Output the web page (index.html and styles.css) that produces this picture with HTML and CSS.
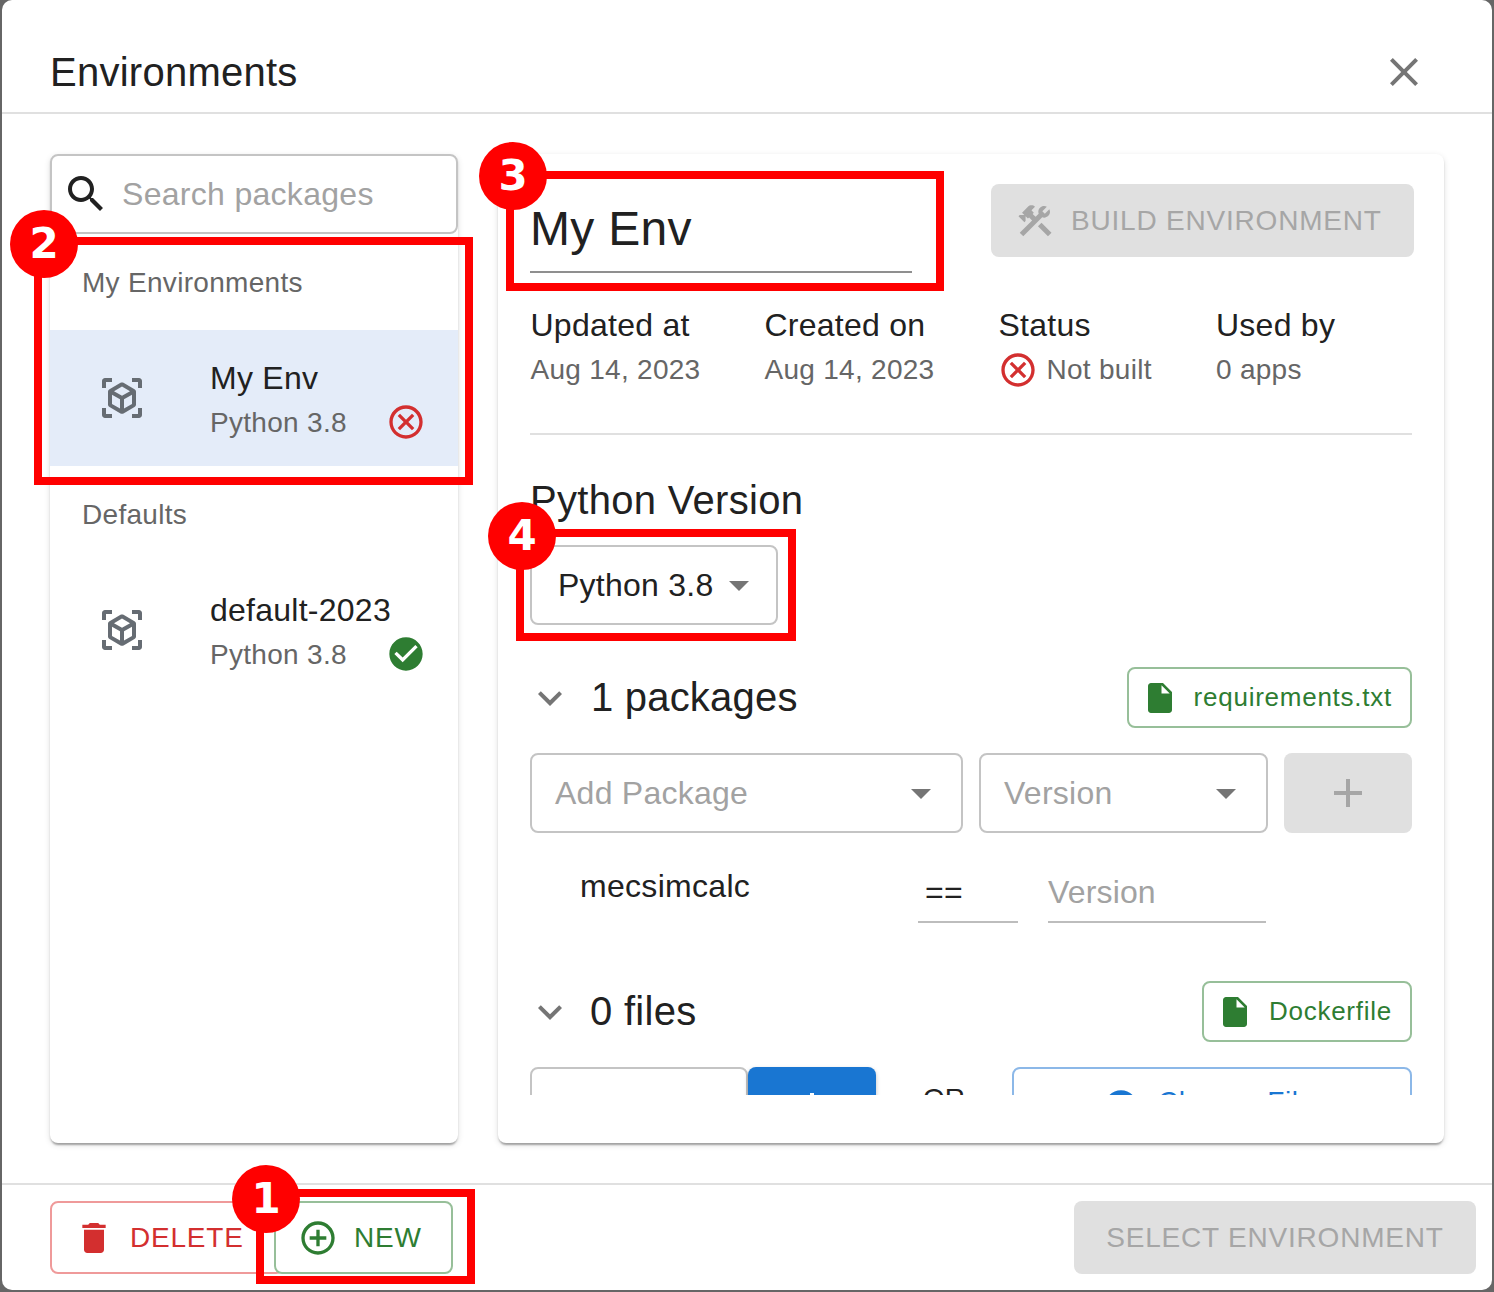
FILE: index.html
```html
<!DOCTYPE html>
<html lang="en">
<head>
  <meta charset="UTF-8">
  <title>Environments</title>
  <link rel="stylesheet" href="styles.css">
</head>
<body>

  <div class="dialog">
    <div class="dialog-head">
      <h2 class="dialog-title">Environments</h2>
      <svg class="icon-48 grey-icon close-icon" viewBox="0 0 24 24"><path d="M19 6.41 17.59 5 12 10.59 6.41 5 5 6.41 10.59 12 5 17.59 6.41 19 12 13.41 17.59 19 19 17.59 13.41 12z"/></svg>
    </div>

    <div class="dialog-body">
      <div class="card side-card">
        <div class="search-box">
          <svg class="icon-48 search-icon" viewBox="0 0 24 24"><path d="M15.5 14h-.79l-.28-.27C15.41 12.59 16 11.11 16 9.5 16 5.91 13.09 3 9.5 3S3 5.91 3 9.5 5.91 16 9.5 16c1.61 0 3.09-.59 4.23-1.57l.27.28v.79l5 4.99L20.49 19l-4.99-5zm-6 0C7.01 14 5 11.99 5 9.5S7.01 5 9.5 5 14 7.01 14 9.5 11.99 14 9.5 14z"/></svg>
          <span class="placeholder">Search packages</span>
        </div>

        <div class="list-label">My Environments</div>
        <div class="env-item selected">
          <svg class="icon-48 env-icon" viewBox="0 0 24 24"><path d="M18.25 7.6l-5.5-3.18c-.46-.27-1.04-.27-1.5 0L5.75 7.6c-.46.27-.75.76-.75 1.3v6.35c0 .54.29 1.03.75 1.3l5.5 3.18c.46.27 1.04.27 1.5 0l5.5-3.18c.46-.27.75-.76.75-1.3V8.9c0-.54-.29-1.03-.75-1.3zM7 14.96v-4.62l4 2.32v4.61l-4-2.31zm5-4.03L8 8.61l4-2.31 4 2.31-4 2.32zm1 6.34v-4.61l4-2.32v4.62l-4 2.31zM7 2H3.5C2.67 2 2 2.67 2 3.5V7h2V4h3V2zm10 0h3.5c.83 0 1.5.67 1.5 1.5V7h-2V4h-3V2zM7 22H3.5c-.83 0-1.5-.67-1.5-1.5V17h2v3h3v2zm10 0h3.5c.83 0 1.5-.67 1.5-1.5V17h-2v3h-3v2z"/></svg>
          <div class="env-text">
            <div class="env-name">My Env</div>
            <div class="env-sub">
              <span>Python 3.8</span>
              <svg class="icon-40 red-icon" viewBox="0 0 24 24"><path d="M12 2C6.47 2 2 6.47 2 12s4.47 10 10 10 10-4.47 10-10S17.53 2 12 2zm0 18c-4.41 0-8-3.59-8-8s3.59-8 8-8 8 3.59 8 8-3.59 8-8 8zm3.59-13L12 10.59 8.41 7 7 8.41 10.59 12 7 15.59 8.41 17 12 13.41 15.59 17 17 15.59 13.41 12 17 8.41z"/></svg>
            </div>
          </div>
        </div>

        <div class="list-label">Defaults</div>
        <div class="env-item">
          <svg class="icon-48 env-icon" viewBox="0 0 24 24"><path d="M18.25 7.6l-5.5-3.18c-.46-.27-1.04-.27-1.5 0L5.75 7.6c-.46.27-.75.76-.75 1.3v6.35c0 .54.29 1.03.75 1.3l5.5 3.18c.46.27 1.04.27 1.5 0l5.5-3.18c.46-.27.75-.76.75-1.3V8.9c0-.54-.29-1.03-.75-1.3zM7 14.96v-4.62l4 2.32v4.61l-4-2.31zm5-4.03L8 8.61l4-2.31 4 2.31-4 2.32zm1 6.34v-4.61l4-2.32v4.62l-4 2.31zM7 2H3.5C2.67 2 2 2.67 2 3.5V7h2V4h3V2zm10 0h3.5c.83 0 1.5.67 1.5 1.5V7h-2V4h-3V2zM7 22H3.5c-.83 0-1.5-.67-1.5-1.5V17h2v3h3v2zm10 0h3.5c.83 0 1.5-.67 1.5-1.5V17h-2v3h-3v2z"/></svg>
          <div class="env-text">
            <div class="env-name">default-2023</div>
            <div class="env-sub">
              <span>Python 3.8</span>
              <svg class="icon-40 green-icon" viewBox="0 0 24 24"><path d="M12 2C6.48 2 2 6.48 2 12s4.48 10 10 10 10-4.48 10-10S17.52 2 12 2zm-2 15-5-5 1.41-1.41L10 14.17l7.59-7.59L19 8l-9 9z"/></svg>
            </div>
          </div>
        </div>
      </div>

      <div class="card main-card">
        <div class="main-scroll">
          <div class="env-head">
            <div class="title-field">My Env</div>
            <div class="btn btn-disabled build-btn">
              <svg class="icon-40" viewBox="0 0 24 24"><path d="m13.7826 15.1719 2.1213-2.1213 5.9963 5.9962-2.1213 2.1213zM17.5 10c1.93 0 3.5-1.57 3.5-3.5 0-.58-.16-1.12-.41-1.6l-2.7 2.7-1.49-1.49 2.7-2.7c-.48-.25-1.02-.41-1.6-.41C15.57 3 14 4.57 14 6.5c0 .41.08.8.21 1.16l-1.85 1.85-1.78-1.78.71-.71-1.41-1.41L12 3.49c-1.17-1.17-3.07-1.17-4.24 0L4.22 7.03l1.41 1.41H2.81l-.71.71 3.54 3.54.71-.71V9.15l1.41 1.41.71-.71 1.78 1.78-7.41 7.41 2.12 2.12L16.34 9.79c.36.13.75.21 1.16.21z"/></svg>
              BUILD ENVIRONMENT
            </div>
          </div>

          <div class="meta-row">
            <div>
              <div class="meta-label">Updated at</div>
              <div class="meta-value">Aug 14, 2023</div>
            </div>
            <div>
              <div class="meta-label">Created on</div>
              <div class="meta-value">Aug 14, 2023</div>
            </div>
            <div>
              <div class="meta-label">Status</div>
              <div class="meta-value status-value">
                <svg class="icon-40 red-icon" viewBox="0 0 24 24"><path d="M12 2C6.47 2 2 6.47 2 12s4.47 10 10 10 10-4.47 10-10S17.53 2 12 2zm0 18c-4.41 0-8-3.59-8-8s3.59-8 8-8 8 3.59 8 8-3.59 8-8 8zm3.59-13L12 10.59 8.41 7 7 8.41 10.59 12 7 15.59 8.41 17 12 13.41 15.59 17 17 15.59 13.41 12 17 8.41z"/></svg>
                Not built
              </div>
            </div>
            <div>
              <div class="meta-label">Used by</div>
              <div class="meta-value">0 apps</div>
            </div>
          </div>

          <div class="divider"></div>

          <h3 class="version-title">Python Version</h3>
          <div class="select-box python-select">
            <span>Python 3.8</span>
            <svg class="icon-48 grey-icon" viewBox="0 0 24 24"><path d="m7 10 5 5 5-5z"/></svg>
          </div>

          <div class="section-row packages-row">
            <svg class="icon-48 grey-icon" viewBox="0 0 24 24"><path d="M16.59 8.59 12 13.17 7.41 8.59 6 10l6 6 6-6z"/></svg>
            <div class="section-title">1 packages</div>
            <div class="btn btn-file">
              <svg class="icon-36" viewBox="0 0 24 24"><path d="M6 2c-1.1 0-1.99.9-1.99 2L4 20c0 1.1.89 2 1.99 2H18c1.1 0 2-.9 2-2V8l-6-6H6zm7 7V3.5L18.5 9H13z"/></svg>
              requirements.txt
            </div>
          </div>

          <div class="add-row">
            <div class="select-box package-select">
              <span class="placeholder">Add Package</span>
              <svg class="icon-48 grey-icon" viewBox="0 0 24 24"><path d="m7 10 5 5 5-5z"/></svg>
            </div>
            <div class="select-box version-select">
              <span class="placeholder">Version</span>
              <svg class="icon-48 grey-icon" viewBox="0 0 24 24"><path d="m7 10 5 5 5-5z"/></svg>
            </div>
            <div class="btn-disabled add-btn">
              <svg class="icon-48" viewBox="0 0 24 24"><path d="M19 13h-6v6h-2v-6H5v-2h6V5h2v6h6v2z"/></svg>
            </div>
          </div>

          <div class="package-row">
            <div class="package-name">mecsimcalc</div>
            <div class="line-field op-field">==</div>
            <div class="line-field version-field placeholder">Version</div>
          </div>

          <div class="section-row files-row">
            <svg class="icon-48 grey-icon" viewBox="0 0 24 24"><path d="M16.59 8.59 12 13.17 7.41 8.59 6 10l6 6 6-6z"/></svg>
            <div class="section-title">0 files</div>
            <div class="btn btn-file">
              <svg class="icon-36" viewBox="0 0 24 24"><path d="M6 2c-1.1 0-1.99.9-1.99 2L4 20c0 1.1.89 2 1.99 2H18c1.1 0 2-.9 2-2V8l-6-6H6zm7 7V3.5L18.5 9H13z"/></svg>
              Dockerfile
            </div>
          </div>

          <div class="upload-row">
            <div class="file-input placeholder">File name</div>
            <div class="file-add">
              <svg class="icon-48" viewBox="0 0 24 24"><path d="M19 13h-6v6h-2v-6H5v-2h6V5h2v6h6v2z"/></svg>
            </div>
            <div class="or-text">OR</div>
            <div class="choose-btn">
              <svg class="icon-40" viewBox="0 0 24 24"><path d="M12 2C6.48 2 2 6.48 2 12s4.48 10 10 10 10-4.48 10-10S17.52 2 12 2zm5 11h-4v4h-2v-4H7v-2h4V7h2v4h4v2z"/></svg>
              <span class="choose-text">Choose File</span>
            </div>
          </div>
        </div>
      </div>
    </div>

    <div class="dialog-foot">
      <div class="foot-left">
        <div class="btn btn-delete">
          <svg class="icon-40" viewBox="0 0 24 24"><path d="M6 19c0 1.1.9 2 2 2h8c1.1 0 2-.9 2-2V7H6v12zM19 4h-3.5l-1-1h-5l-1 1H5v2h14V4z"/></svg>
          DELETE
        </div>
        <div class="btn btn-new">
          <svg class="icon-40" viewBox="0 0 24 24"><path d="M13 7h-2v4H7v2h4v4h2v-4h4v-2h-4V7zm-1-5C6.48 2 2 6.48 2 12s4.48 10 10 10 10-4.48 10-10S17.52 2 12 2zm0 18c-4.41 0-8-3.59-8-8s3.59-8 8-8 8 3.59 8 8-3.59 8-8 8z"/></svg>
          NEW
        </div>
      </div>
      <div class="btn btn-disabled select-btn">SELECT ENVIRONMENT</div>
    </div>
  </div>

  <!-- tutorial markers drawn over the screenshot -->
  <div class="mark-box mark-box-1"></div>
  <div class="mark-box mark-box-2"></div>
  <div class="mark-box mark-box-3"></div>
  <div class="mark-box mark-box-4"></div>
  <div class="mark-num mark-num-1">1</div>
  <div class="mark-num mark-num-2">2</div>
  <div class="mark-num mark-num-3">3</div>
  <div class="mark-num mark-num-4">4</div>

</body>
</html>
```

FILE: styles.css
```css
* {
  box-sizing: border-box;
}

html, body {
  height: 100%;
}

body {
  margin: 0;
  background: #666;
  color: #212121;
  font-family: "Liberation Sans", Arial, sans-serif;
  overflow: hidden;
  position: relative;
}

svg {
  display: block;
  flex: none;
  fill: currentColor;
}

.icon-48 { width: 48px; height: 48px; }
.icon-40 { width: 40px; height: 40px; }
.icon-36 { width: 36px; height: 36px; }

.grey-icon { color: #757575; }
.red-icon { color: #d32f2f; }
.green-icon { color: #2e7d32; }

.placeholder {
  color: #a2a2a2;
}

/* dialog */
.dialog {
  width: 1490px;
  height: 1290px;
  margin-left: 2px;
  background: #fff;
  border-radius: 10px;
  display: flex;
  flex-direction: column;
}

.dialog-head {
  height: 114px;
  flex: none;
  padding: 32px 64px 0 48px;
  border-bottom: 2px solid #e0e0e0;
  display: flex;
  align-items: center;
  justify-content: space-between;
}

.dialog-title {
  margin: 0;
  font-size: 40px;
  font-weight: 400;
  letter-spacing: .25px;
}

.dialog-body {
  flex: 1;
  padding: 40px 48px 0;
  display: flex;
  gap: 40px;
}

.card {
  height: 989px;
  background: #fff;
  border-radius: 8px;
  box-shadow: 0 4px 2px -2px rgba(0,0,0,.2), 0 2px 2px rgba(0,0,0,.14), 0 2px 6px rgba(0,0,0,.12);
}

/* left column */
.side-card {
  width: 408px;
  flex: none;
}

.search-box {
  height: 80px;
  padding-left: 10px;
  border: 2px solid #c4c4c4;
  border-radius: 8px;
  display: flex;
  align-items: center;
  gap: 12px;
  font-size: 32px;
  letter-spacing: .3px;
}

.search-icon {
  color: #212121;
}

.list-label {
  height: 96px;
  padding: 30px 0 0 32px;
  font-size: 28px;
  line-height: 38px;
  letter-spacing: .3px;
  color: #666;
}

.env-item {
  height: 136px;
  padding: 0 32px 0 48px;
  display: flex;
  align-items: center;
  gap: 64px;
}

.env-item.selected {
  background: #e4ecf9;
}

.env-icon {
  color: #666c73;
}

.env-text {
  flex: 1;
  padding-top: 8px;
}

.env-name {
  font-size: 32px;
  line-height: 40px;
  letter-spacing: .25px;
}

.env-sub {
  margin-top: 2px;
  height: 46px;
  display: flex;
  align-items: center;
  justify-content: space-between;
  font-size: 28px;
  letter-spacing: .3px;
  color: #666;
}

.env-sub svg {
  margin-top: -2px;
}

/* right column */
.main-card {
  flex: 1;
  padding: 0 30px 0 32px;
}

.main-scroll {
  height: 941px;
  overflow: hidden;
  padding: 30px 2px 0 0;
}

.env-head {
  height: 88px;
  margin-right: -2px;
  display: flex;
  justify-content: space-between;
  align-items: flex-start;
}

.title-field {
  width: 382px;
  height: 89px;
  padding-top: 17px;
  font-size: 48px;
  line-height: 56px;
  letter-spacing: .3px;
  border-bottom: 2px solid #8f8f8f;
}

.btn {
  display: flex;
  align-items: center;
  border-radius: 8px;
  font-size: 28px;
  letter-spacing: .8px;
}

.btn-disabled {
  background: #e0e0e0;
  color: #a6a6a6;
}

.build-btn {
  width: 423px;
  height: 73px;
  padding-left: 24px;
  gap: 16px;
}

.meta-row {
  margin-top: 34px;
  padding-left: .5px;
  display: grid;
  grid-template-columns: 234px 234px 217.5px 1fr;
}

.meta-label {
  font-size: 32px;
  line-height: 38px;
  letter-spacing: .25px;
}

.meta-value {
  margin-top: 6px;
  font-size: 28px;
  line-height: 40px;
  letter-spacing: .28px;
  color: #666;
}

.status-value {
  display: flex;
  align-items: center;
  gap: 9px;
}

.status-value svg {
  margin-left: -1px;
}

.divider {
  margin-top: 43px;
  height: 2px;
  background: #e0e0e0;
}

.version-title {
  margin: 42px 0 0;
  font-size: 40px;
  line-height: 46px;
  font-weight: 400;
  letter-spacing: .3px;
}

.select-box {
  height: 80px;
  border: 2px solid #c4c4c4;
  border-radius: 8px;
  display: flex;
  align-items: center;
  justify-content: space-between;
  font-size: 32px;
  letter-spacing: .25px;
}

.python-select {
  width: 248px;
  margin-top: 22px;
  padding: 0 13px 0 26px;
}

.section-row {
  height: 61px;
  display: flex;
  align-items: center;
}

.section-row .grey-icon {
  margin-left: -4px;
}

.section-title {
  flex: 1;
  margin-left: 16px;
  font-size: 40px;
  letter-spacing: .3px;
}

.packages-row {
  margin-top: 42px;
}

.packages-row .section-title {
  margin-left: 17px;
  letter-spacing: .2px;
}

.btn-file {
  height: 61px;
  padding: 0 18px 0 13px;
  gap: 16px;
  border: 2px solid #97bf99;
  color: #2e7d32;
  font-size: 26px;
  letter-spacing: .75px;
}

.add-row {
  margin-top: 25px;
  display: flex;
  gap: 16px;
}

.package-select {
  width: 433px;
  padding: 0 16px 0 23px;
}

.version-select {
  width: 289px;
  padding: 0 16px 0 23px;
}

.add-btn {
  flex: 1;
  height: 80px;
  border-radius: 8px;
  display: flex;
  align-items: center;
  justify-content: center;
}

.package-row {
  margin-top: 30px;
  height: 62px;
  display: flex;
  gap: 30px;
  font-size: 32px;
  letter-spacing: .3px;
}

.package-name {
  width: 358px;
  padding: 5px 0 0 50px;
}

.line-field {
  height: 60px;
  padding-top: 11px;
  border-bottom: 2px solid #bdbdbd;
}

.op-field {
  width: 100px;
  padding-left: 7px;
}

.version-field {
  width: 218px;
  letter-spacing: .15px;
}

.files-row {
  margin-top: 56px;
}

.upload-row {
  margin-top: 25px;
  display: flex;
  align-items: flex-start;
}

.file-input {
  width: 218px;
  height: 80px;
  padding: 20px 0 0 24px;
  border: 2px solid #c4c4c4;
  border-radius: 8px;
  font-size: 32px;
}

.file-add {
  width: 128px;
  height: 80px;
  background: #1976d2;
  color: #fff;
  border-radius: 8px;
  display: flex;
  align-items: center;
  justify-content: center;
  box-shadow: 0 2px 4px rgba(0,0,0,.25);
}

.or-text {
  width: 136px;
  padding-top: 16px;
  text-align: center;
  font-size: 28px;
}

.choose-btn {
  flex: 1;
  height: 80px;
  padding-right: 8px;
  border: 2px solid #8cb8e8;
  border-radius: 8px;
  color: #1976d2;
  display: flex;
  align-items: center;
  justify-content: center;
  gap: 17px;
  font-size: 28px;
  letter-spacing: .7px;
}

.choose-text {
  padding-bottom: 10px;
}

/* footer */
.dialog-foot {
  flex: none;
  height: 107px;
  padding: 16px 16px 0 48px;
  border-top: 2px solid #e0e0e0;
  display: flex;
  justify-content: space-between;
  align-items: flex-start;
}

.foot-left {
  display: flex;
}

.btn-delete {
  width: 234px;
  height: 73px;
  padding-left: 22px;
  gap: 16px;
  border: 2px solid #ef9a9a;
  color: #d32f2f;
}

.btn-new {
  width: 179px;
  height: 73px;
  margin-left: -10px;
  padding-left: 22px;
  gap: 16px;
  background: #fff;
  border: 2px solid #97bf99;
  color: #2e7d32;
}

.select-btn {
  width: 402px;
  height: 73px;
  justify-content: center;
}

/* tutorial markers */
.mark-box {
  position: absolute;
  border: 8px solid #f00;
}

.mark-box-1 { left: 256px; top: 1189px; width: 219px; height: 95px; }
.mark-box-2 { left: 34px; top: 237px; width: 439px; height: 248px; }
.mark-box-3 { left: 506px; top: 171px; width: 438px; height: 120px; }
.mark-box-4 { left: 516px; top: 529px; width: 280px; height: 112px; }

.mark-num {
  position: absolute;
  width: 68px;
  height: 68px;
  border-radius: 50%;
  background: #f00;
  color: #fff;
  font-family: "DejaVu Sans", sans-serif;
  font-weight: 700;
  font-size: 42px;
  line-height: 68px;
  text-align: center;
}

.mark-num-1 { left: 232px; top: 1165px; }
.mark-num-2 { left: 10px; top: 210px; }
.mark-num-3 { left: 479px; top: 142px; }
.mark-num-4 { left: 488px; top: 502px; }
```
